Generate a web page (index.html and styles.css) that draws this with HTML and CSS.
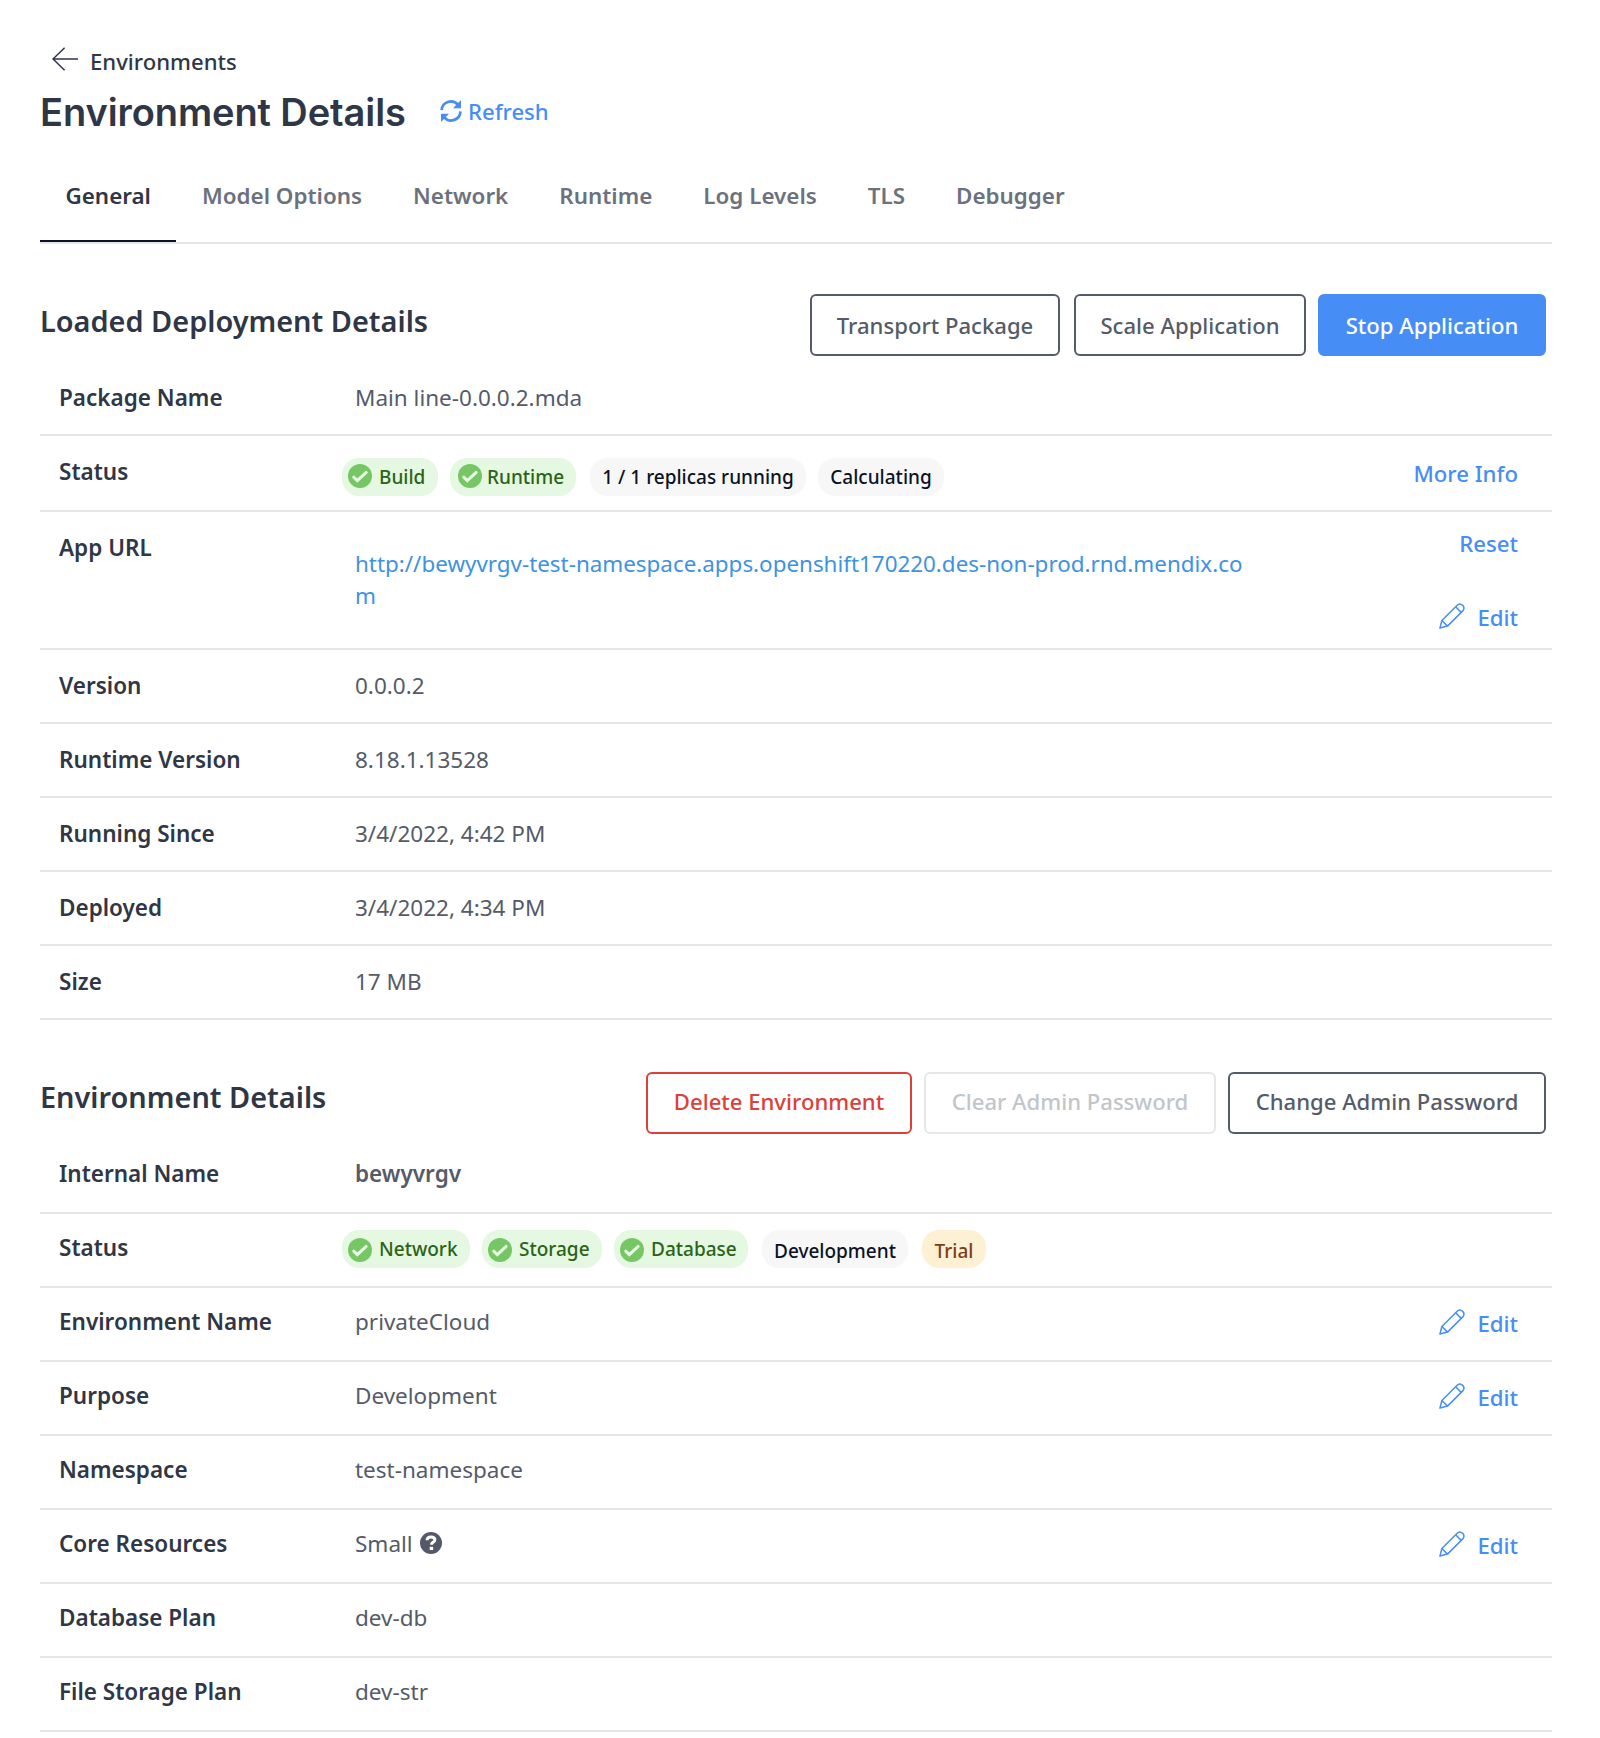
FILE: index.html
```html
<!DOCTYPE html>
<html lang="en">
<head>
<meta charset="utf-8">
<title>Environment Details</title>
<link rel="stylesheet" href="styles.css">
</head>
<body>
<svg class="sprite" aria-hidden="true">
  <symbol id="i-check" viewBox="0 0 24 24"><circle cx="12" cy="12" r="12" fill="#76c665"/><path d="M5.7 13.2 9.3 16.6 18.2 8.4" fill="none" stroke="#e8f9e4" stroke-width="3" stroke-linecap="round"/></symbol>
  <symbol id="i-pencil" viewBox="0 0 26 26"><g fill="none" stroke="#468ef5" stroke-width="1.5" stroke-linejoin="round"><path d="M.9 25.1 2.9 17.5 18.4 2a4 4 0 0 1 5.6 5.6L8.5 23.1Z"/><path d="M2.9 17.5 8.5 23.1M16.6 3.8 22.2 9.4"/></g></symbol>
</svg>
<main class="page">
  <a class="back">
    <svg class="back-icon" viewBox="0 0 26 24"><path d="M12.6.7 1 12 12.6 23.3M1 12H26" fill="none" stroke="#2f3646" stroke-width="1.5"/></svg>
    <span>Environments</span>
  </a>
  <div class="title-row">
    <h1>Environment Details</h1>
    <a class="refresh">
      <svg class="refresh-icon" viewBox="0 0 22 22"><path d="M1.6 10.2A9.3 9.3 0 0 1 17.8 4.6M20.4 11.4A9.3 9.3 0 0 1 4.2 17.4" fill="none" stroke="#468ef5" stroke-width="2.7"/><path d="M21 0V8.2H13ZM1 22V13.8H9Z" fill="#468ef5"/></svg>
      <span>Refresh</span>
    </a>
  </div>
  <nav class="tabs">
    <a class="tab active">General</a><a class="tab">Model Options</a><a class="tab">Network</a><a class="tab">Runtime</a><a class="tab">Log Levels</a><a class="tab">TLS</a><a class="tab">Debugger</a>
  </nav>

  <section class="section deployment">
    <header class="section-head">
      <h2>Loaded Deployment Details</h2>
      <div class="buttons">
        <button class="btn transport">Transport Package</button>
        <button class="btn scale">Scale Application</button>
        <button class="btn primary">Stop Application</button>
      </div>
    </header>
    <div class="row"><div class="label">Package Name</div><div class="value">Main line-0.0.0.2.mda</div></div>
    <div class="row status">
      <div class="label">Status</div>
      <div class="pills">
        <span class="pill ok w-build"><svg><use href="#i-check"/></svg>Build</span>
        <span class="pill ok w-runtime"><svg><use href="#i-check"/></svg>Runtime</span>
        <span class="pill neutral w-replicas">1 / 1 replicas running</span>
        <span class="pill neutral w-calc">Calculating</span>
      </div>
      <a class="action">More Info</a>
    </div>
    <div class="row url">
      <div class="label">App URL</div>
      <div class="value"><a class="app-url">http://bewyvrgv-test-namespace.apps.openshift170220.des-non-prod.rnd.mendix.com</a></div>
      <div class="actions">
        <a class="action">Reset</a>
        <a class="action edit"><svg><use href="#i-pencil"/></svg>Edit</a>
      </div>
    </div>
    <div class="row"><div class="label">Version</div><div class="value">0.0.0.2</div></div>
    <div class="row"><div class="label">Runtime Version</div><div class="value">8.18.1.13528</div></div>
    <div class="row"><div class="label">Running Since</div><div class="value">3/4/2022, 4:42 PM</div></div>
    <div class="row"><div class="label">Deployed</div><div class="value">3/4/2022, 4:34 PM</div></div>
    <div class="row"><div class="label">Size</div><div class="value">17 MB</div></div>
  </section>

  <section class="section environment">
    <header class="section-head">
      <h2>Environment Details</h2>
      <div class="buttons">
        <button class="btn danger">Delete Environment</button>
        <button class="btn disabled">Clear Admin Password</button>
        <button class="btn change">Change Admin Password</button>
      </div>
    </header>
    <div class="row"><div class="label">Internal Name</div><div class="value strong">bewyvrgv</div></div>
    <div class="row status">
      <div class="label">Status</div>
      <div class="pills">
        <span class="pill ok w-network"><svg><use href="#i-check"/></svg>Network</span>
        <span class="pill ok w-storage"><svg><use href="#i-check"/></svg>Storage</span>
        <span class="pill ok w-database"><svg><use href="#i-check"/></svg>Database</span>
        <span class="pill neutral w-dev">Development</span>
        <span class="pill warn w-trial">Trial</span>
      </div>
    </div>
    <div class="row"><div class="label">Environment Name</div><div class="value">privateCloud</div><a class="action edit"><svg><use href="#i-pencil"/></svg>Edit</a></div>
    <div class="row"><div class="label">Purpose</div><div class="value">Development</div><a class="action edit"><svg><use href="#i-pencil"/></svg>Edit</a></div>
    <div class="row"><div class="label">Namespace</div><div class="value">test-namespace</div></div>
    <div class="row"><div class="label">Core Resources</div><div class="value help">Small<svg viewBox="0 0 22 22"><circle cx="11" cy="11" r="11" fill="#535967"/><path d="M7 8.2C7.1 6 8.7 4.9 11 4.9 13.3 4.9 14.9 6 14.9 7.9 14.9 10.2 11.5 10 11.5 12.8" fill="none" stroke="#fff" stroke-width="3"/><path d="M9.7 14.8H13.1V18H9.7Z" fill="#fff"/></svg></div><a class="action edit"><svg><use href="#i-pencil"/></svg>Edit</a></div>
    <div class="row"><div class="label">Database Plan</div><div class="value">dev-db</div></div>
    <div class="row"><div class="label">File Storage Plan</div><div class="value">dev-str</div></div>
  </section>
</main>
</body>
</html>
```
FILE: styles.css
```css
* { box-sizing: border-box; }
body { margin: 0; background: #fff; color: #2f3646; font: 400 22.5px/30px "Noto Sans", sans-serif; }
h1, h2 { margin: 0; }
.sprite { display: none; }
.page { padding: 46px 48px 0 40px; }

.back { display: flex; align-items: flex-start; gap: 12px; height: 42px; padding-left: 12px; font-weight: 500; font-size: 22.1px; }
.back-icon { width: 26px; height: 24px; margin-top: 1px; }

.title-row { display: flex; align-items: flex-start; height: 92px; }
h1 { width: 400px; font: 600 38px/48px Inter, "Noto Sans", sans-serif; letter-spacing: -0.09px; white-space: nowrap; }
.refresh { display: flex; gap: 6px; margin-top: 8px; color: #468ef5; font-weight: 500; font-size: 22.1px; }
.refresh-icon { width: 22px; height: 22px; margin-top: 4px; }

.tabs { display: flex; height: 64px; border-bottom: 2px solid #e6e6e8; }
.tab { height: 62px; padding: 1px 25.5px 0; font-weight: 600; font-size: 22.4px; color: #6c717e; white-space: nowrap; }
.tab.active { color: #2f3646; border-bottom: 2px solid #0a1326; }

.section-head { display: flex; justify-content: space-between; }
.deployment .section-head { height: 118px; padding: 50px 6px 0 0; }
.environment .section-head { height: 120px; padding: 52px 6px 0 0; }
h2 { font-weight: 600; font-size: 28.9px; line-height: 40px; }
.deployment h2 { margin-top: 7px; }
.environment h2 { margin-top: 5px; }

.buttons { display: flex; gap: 12px; }
.btn { height: 62px; padding: 0; border: 2px solid #555b69; border-radius: 6px; background: #fff; color: #555b69; font: 500 22.1px/30px "Noto Sans", sans-serif; white-space: nowrap; }
.environment .btn { padding-bottom: 4px; }
.btn.transport { width: 250px; margin-right: 2px; }
.btn.scale { width: 232px; }
.btn.primary { width: 228px; border-color: #468ef5; background: #468ef5; color: #fff; }
.btn.danger { width: 266px; border-color: #dc4038; color: #dc4038; }
.btn.disabled { width: 292px; border-color: #e6e7e9; color: #c2c5ca; }
.btn.change { width: 318px; }

.row { display: flex; align-items: flex-start; height: 74px; padding: 21px 34px 0 19px; border-bottom: 2px solid #e6e6e8; }
.deployment .row.status { height: 76px; }
.deployment .row.url { height: 138px; }
.environment .row { padding-top: 19px; }
.label { width: 296px; font-weight: 600; }
.value { color: #555b69; }
.value.strong { font-weight: 600; }
.url .value { width: 892px; padding-top: 15px; font-size: 22.4px; line-height: 32px; word-break: break-all; }
.app-url { color: #3d93e2; }
.help { display: flex; gap: 7px; }
.help svg { width: 22px; height: 22px; margin-top: 3px; }

.action { display: flex; margin-left: auto; margin-top: 2px; color: #468ef5; font-weight: 500; font-size: 22.2px; }
.edit svg { width: 26px; height: 26px; margin: 0 12px 0 0; }
.actions { display: flex; flex-direction: column; gap: 44px; margin: -4px 0 0 auto; }
.actions .action { margin-top: 0; }

.pills { display: flex; margin-left: -13px; font-size: 19px; font-weight: 500; line-height: 26px; }
.deployment .pills { margin-top: 1px; }
.environment .pills { margin-top: -3px; }
.pill { display: flex; height: 38px; padding-top: 6px; border-radius: 17px; white-space: nowrap; }
.pill svg { width: 24px; height: 24px; margin-right: 7px; }
.environment .pill svg { margin-top: 2px; }
.ok { background: #e5f8e1; color: #2b6416; }
.neutral { background: #f7f7f7; color: #0a1326; justify-content: center; }
.warn { background: #fdf0d3; color: #7a3e1a; justify-content: center; }
.environment .neutral, .environment .warn { padding-top: 8px; }
.w-build { width: 96px; padding-left: 6px; margin-right: 12px; }
.w-runtime { width: 126px; padding-left: 8px; margin-right: 14px; }
.w-runtime svg { margin-right: 5px; }
.w-replicas { width: 216px; margin-right: 12px; }
.w-calc { width: 126px; }
.w-network { width: 128px; padding-left: 6px; margin-right: 12px; }
.w-storage { width: 120px; padding-left: 6px; margin-right: 12px; }
.w-database { width: 134px; padding-left: 6px; margin-right: 14px; }
.w-dev { width: 146px; margin-right: 14px; }
.w-trial { width: 64px; }
```
